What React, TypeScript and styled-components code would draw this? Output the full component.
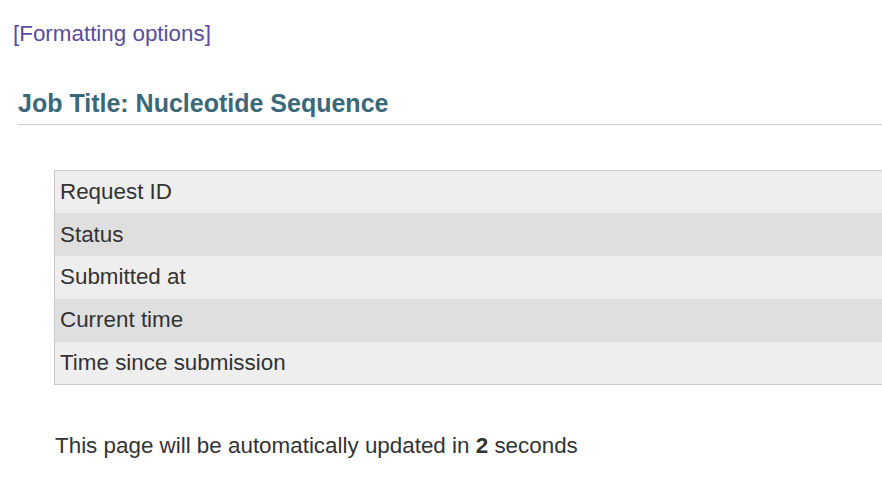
import React from "react";
import styled, { createGlobalStyle } from "styled-components";

const Global = createGlobalStyle`
  html, body {
    margin: 0;
    padding: 0;
    background: #ffffff;
    overflow: hidden;
  }
  body {
    font-family: "Liberation Sans", Arial, Helvetica, sans-serif;
    color: #333333;
  }
`;

const Page = styled.div`
  width: 882px;
  min-height: 500px;
  overflow: hidden;
  padding-top: 21px;
  box-sizing: border-box;
`;

const FormatLink = styled.a`
  display: block;
  margin-left: 13px;
  font-size: 22.4px;
  line-height: 26px;
  color: #5e4b9c;
  text-decoration: none;
  cursor: pointer;
`;

const Heading = styled.h2`
  margin: 41px 0 0 18px;
  padding: 0 0 6px 0;
  font-size: 25px;
  line-height: 30px;
  font-weight: bold;
  color: #3b6878;
  border-bottom: 1px solid #cccccc;
`;

const Table = styled.table`
  margin: 45px 0 0 54px;
  width: 900px;
  border-collapse: collapse;
  border-top: 1px solid #c8c8c8;
  border-bottom: 1px solid #c8c8c8;
  border-left: 1px solid #c8c8c8;
`;

const Row = styled.tr<{ $shade: boolean }>`
  background: ${(p) => (p.$shade ? "#dfdfdf" : "#eeeeee")};
  height: 42.8px;
`;

const Cell = styled.td`
  padding: 0 0 0 5px;
  font-size: 22.4px;
  line-height: 26px;
  color: #333333;
  vertical-align: middle;
`;

const Note = styled.p`
  margin: 48px 0 0 55px;
  font-size: 22.4px;
  line-height: 26px;
  color: #333333;

  b {
    font-weight: bold;
  }
`;

const rows = [
  "Request ID",
  "Status",
  "Submitted at",
  "Current time",
  "Time since submission",
];

export default function App() {
  return (
    <>
      <Global />
      <Page>
        <FormatLink>[Formatting options]</FormatLink>
        <Heading>Job Title: Nucleotide Sequence</Heading>
        <Table>
          <tbody>
            {rows.map((r, i) => (
              <Row key={r} $shade={i % 2 === 1}>
                <Cell>{r}</Cell>
              </Row>
            ))}
          </tbody>
        </Table>
        <Note>
          This page will be automatically updated in <b>2</b> seconds
        </Note>
      </Page>
    </>
  );
}
